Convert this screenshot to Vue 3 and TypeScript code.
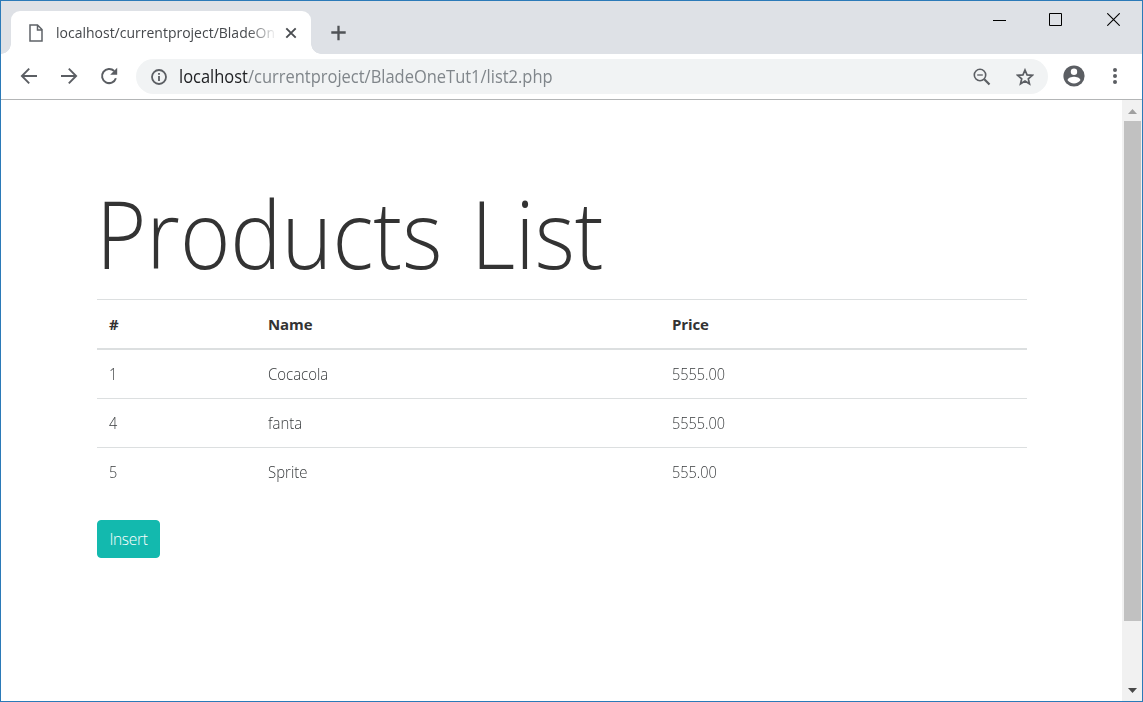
<script setup lang="ts">
interface Product {
  id: number
  name: string
  price: string
}

const products: Product[] = [
  { id: 1, name: 'Cocacola', price: '5555.00' },
  { id: 4, name: 'fanta', price: '5555.00' },
  { id: 5, name: 'Sprite', price: '555.00' },
]
</script>

<template>
  <div class="window">
    <header class="tabstrip">
      <div class="tab">
        <svg class="file" width="14" height="18" viewBox="0 0 14 18"><path d="M1 1h7.5L13 5.5V17H1zM8.5 1v5H13" fill="none" stroke="#5f6368" stroke-width="1.5" /></svg>
        <span class="tab-title"><span class="tab-text">localhost/currentproject/BladeOn</span></span>
        <svg class="tab-close" width="12" height="12" viewBox="0 0 12 12"><path d="M1.3 1.3l9.4 9.4M10.7 1.3L1.3 10.7" stroke="#4a4d51" stroke-width="1.9" /></svg>
      </div>
      <svg class="plus" width="16" height="16" viewBox="0 0 16 16"><path d="M7.5 .8v14.4M.3 7.5h14.4" stroke="#505357" stroke-width="2.3" /></svg>
      <div class="controls">
        <svg width="13" height="13" viewBox="0 0 13 13"><path d="M0 7.5h13" stroke="#000" /></svg>
        <svg width="13" height="13" viewBox="0 0 13 13"><path d="M.5.5h12v12H.5z" fill="none" stroke="#000" /></svg>
        <svg width="13" height="13" viewBox="0 0 13 13"><path d="M.3.3l12.4 12.4M12.7.3L.3 12.7" stroke="#000" stroke-width="1.1" /></svg>
      </div>
    </header>
    <nav class="toolbar">
      <svg class="back" width="18" height="18" viewBox="0 0 18 18"><path d="M17 9H2M9.2 1.7L1.9 9l7.3 7.3" fill="none" stroke="#5b5e63" stroke-width="1.9" /></svg>
      <svg class="forward" width="18" height="18" viewBox="0 0 18 18"><path d="M1 9h15M8.8 1.7L16.1 9l-7.3 7.3" fill="none" stroke="#5b5e63" stroke-width="1.9" /></svg>
      <svg class="reload" width="18" height="18" viewBox="0 0 18 18"><path d="M15.9 11.2A7.1 7.1 0 1 1 14.2 4" fill="none" stroke="#5b5e63" stroke-width="2" /><path d="M17.2.8v7h-7z" fill="#5b5e63" /></svg>
      <div class="omnibox">
        <svg width="16" height="16" viewBox="0 0 16 16"><circle cx="8" cy="8" r="7" fill="none" stroke="#5b5e63" stroke-width="1.8" /><path d="M7.1 7h1.8v5H7.1zM7.1 4h1.8v1.8H7.1z" fill="#5b5e63" /></svg>
        <span class="url"><b>localhost</b>/currentproject/BladeOneTut1/list2.php</span>
        <svg class="zoom" width="18" height="18" viewBox="0 0 18 18"><circle cx="7" cy="7" r="5.7" fill="none" stroke="#5b5e63" stroke-width="1.6" /><path d="M4.2 7h5.6" stroke="#5b5e63" stroke-width="1.3" /><path d="M11.3 11.3l5.2 5.2" stroke="#5b5e63" stroke-width="2.2" /></svg>
        <svg class="star" width="18" height="18" viewBox="0 0 18 18"><path d="M9 2l2.05 4.85 5.25.45-4 3.45 1.2 5.1L9 13.1l-4.5 2.75 1.2-5.1-4-3.45 5.25-.45z" fill="none" stroke="#5b5e63" stroke-width="1.7" /></svg>
      </div>
      <svg class="avatar" width="22" height="22" viewBox="0 0 22 22"><circle cx="11" cy="11" r="10.6" fill="#5b5e63" /><circle cx="11" cy="6.8" r="3.2" fill="#fff" /><path d="M4.6 15.2c0-2.3 4.2-3.4 6.4-3.4s6.4 1.1 6.4 3.4c-1.4 2-3.8 3.2-6.4 3.2s-5-1.2-6.4-3.2z" fill="#fff" /></svg>
      <svg class="menu" width="4" height="16" viewBox="0 0 4 16"><g fill="#5b5e63"><circle cx="2" cy="2" r="2" /><circle cx="2" cy="8" r="2" /><circle cx="2" cy="14" r="2" /></g></svg>
    </nav>
    <div class="viewport">
      <main class="page">
        <h1><span>Products List</span></h1>
        <table>
          <colgroup><col class="c-id" /><col class="c-name" /><col /></colgroup>
          <thead>
            <tr><th>#</th><th>Name</th><th>Price</th></tr>
          </thead>
          <tbody>
            <tr v-for="p in products" :key="p.id">
              <td><span class="w id">{{ p.id }}</span></td>
              <td><span class="w name">{{ p.name }}</span></td>
              <td><span class="w">{{ p.price }}</span></td>
            </tr>
          </tbody>
        </table>
        <button type="button">Insert</button>
      </main>
      <aside class="scrollbar">
        <svg width="9" height="5" viewBox="0 0 9 5"><path d="M0 5L4.5 0 9 5z" fill="#a0a0a0" /></svg>
        <div class="thumb"></div>
        <svg class="down" width="9" height="5" viewBox="0 0 9 5"><path d="M0 0h9L4.5 5z" fill="#484848" /></svg>
      </aside>
    </div>
  </div>
</template>

<style>
body {
  margin: 0;
  overflow: hidden;
}
</style>

<style scoped>
* {
  box-sizing: border-box;
}
svg {
  display: block;
  flex: none;
}
.window {
  width: 1143px;
  height: 702px;
  display: flex;
  flex-direction: column;
  border: 1px solid #2b7ab8;
  background: #fff;
  font-family: 'Open Sans', 'Noto Sans', sans-serif;
}
.tabstrip {
  height: 53px;
  flex: none;
  display: flex;
  align-items: flex-start;
  padding-left: 10px;
  background: #dee1e6;
}
.tab {
  position: relative;
  width: 300px;
  height: 43px;
  margin-top: 10px;
  padding: 1px 14px 0 18px;
  display: flex;
  align-items: center;
  border-radius: 9px 9px 0 0;
  background: #fff;
}
.tab::before,
.tab::after {
  content: '';
  position: absolute;
  bottom: 0;
  width: 10px;
  height: 10px;
}
.tab::before {
  left: -10px;
  background: radial-gradient(circle at 0 0, transparent 9.5px, #fff 10px);
}
.tab::after {
  right: -10px;
  background: radial-gradient(circle at 100% 0, transparent 9.5px, #fff 10px);
}
.tab-title {
  width: 219px;
  margin-left: 13px;
  white-space: nowrap;
  font-size: 14.5px;
  line-height: 24px;
  color: #45484c;
  -webkit-mask-image: linear-gradient(90deg, #000 192px, transparent 221px);
  mask-image: linear-gradient(90deg, #000 192px, transparent 221px);
}
.tab-text {
  display: inline-block;
  transform: scaleX(0.965);
  transform-origin: 0 0;
}
.tab-close {
  margin-left: 10px;
}
.plus {
  margin: 24px 0 0 20px;
}
.controls {
  display: flex;
  gap: 45px;
  margin: 12px 22px 0 auto;
}
.controls svg:first-child {
  margin-right: -2px;
}
.toolbar {
  height: 46px;
  flex: none;
  display: flex;
  align-items: center;
  padding: 0 25px 0 19px;
  border-bottom: 1px solid #b3b5b6;
}
.back,
.forward,
.reload,
.avatar,
.menu {
  margin-bottom: 1px;
}
.forward {
  margin-left: 22px;
}
.reload {
  margin-left: 22px;
}
.omnibox {
  width: 912px;
  height: 35px;
  margin-left: 18px;
  padding: 0 14px 0 15px;
  display: flex;
  align-items: center;
  border-radius: 18px;
  background: #f1f3f4;
}
.url {
  width: 374px;
  margin: 0 0 1px 12px;
  white-space: nowrap;
  font-size: 18px;
  line-height: 24px;
  color: #80868b;
  transform: scaleX(0.915);
  transform-origin: 0 0;
}
.url b {
  font-weight: 400;
  color: #202124;
}
.zoom {
  margin-left: auto;
}
.star {
  margin-left: 25px;
}
.avatar {
  margin-left: 15px;
}
.menu {
  margin-left: auto;
}
.viewport {
  flex: 1;
  min-height: 0;
  display: flex;
}
.page {
  flex: 1;
  padding: 77px 94px 0 96px;
  color: #373a3c;
}
h1 {
  height: 115px;
  margin: 0 0 7px -1px;
  font-size: 94px;
  font-weight: 300;
  line-height: 113px;
  white-space: nowrap;
  color: #333;
}
h1 span {
  display: inline-block;
  transform: scaleX(0.916);
  transform-origin: 0 0;
  word-spacing: 7px;
}
table {
  width: 930px;
  table-layout: fixed;
  border-collapse: collapse;
  font-size: 16px;
  line-height: 24px;
  font-weight: 300;
}
.c-id {
  width: 159px;
}
.c-name {
  width: 404px;
}
th,
td {
  padding: 12px 12px;
  text-align: left;
  border-top: 1px solid #dcdfe0;
}
th {
  font-size: 15px;
  font-weight: 700;
  letter-spacing: -0.1px;
  border-bottom: 2px solid #dcdfe0;
  color: #333;
}
.w {
  display: inline-block;
  transform: scaleX(0.905);
  transform-origin: 0 0;
}
.name {
  transform: scaleX(0.935);
}
.id {
  margin-left: -0.5px;
}
button {
  display: block;
  width: 63px;
  height: 38px;
  margin-top: 24px;
  padding: 0;
  border: 1px solid #13b9ae;
  border-radius: 4px;
  background: #13b9ae;
  color: #fff;
  font: 300 15.5px/36px 'Open Sans', 'Noto Sans', sans-serif;
  letter-spacing: -0.3px;
}
.scrollbar {
  width: 20px;
  display: flex;
  flex-direction: column;
  align-items: center;
  padding: 9px 1px 8px 2px;
  background: #f1f1f1;
}
.thumb {
  width: 17px;
  height: 500px;
  margin-top: 7px;
  background: #c1c1c1;
}
.down {
  margin-top: auto;
}
</style>
